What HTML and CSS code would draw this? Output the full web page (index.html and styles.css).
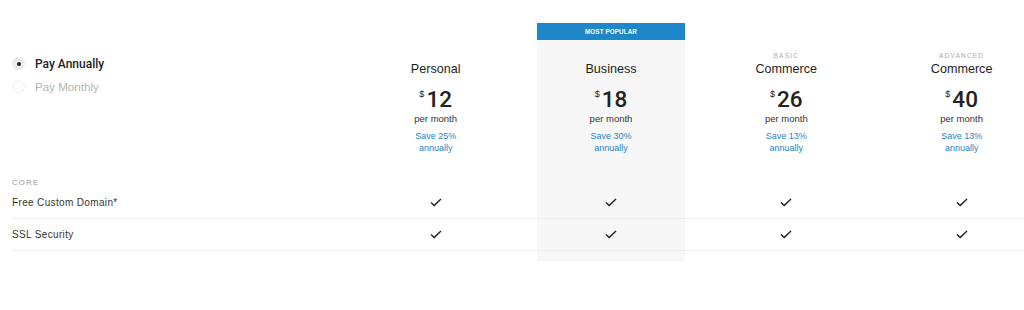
FILE: index.html
```html
<!DOCTYPE html>
<html>
<head>
<meta charset="utf-8">
<link rel="stylesheet" href="styles.css">
</head>
<body>
<div class="table">
  <div class="row head">
    <div class="cell toggle">
      <div class="opt on"><span class="radio"><span class="dot"></span></span>Pay Annually</div>
      <div class="opt off"><span class="radio"></span>Pay Monthly</div>
    </div>
    <div class="cell plan">
      <div class="banner-slot"></div>
      <div class="tier"></div>
      <div class="name">Personal</div>
      <div class="price"><span class="cur">$</span>12</div>
      <div class="per">per month</div>
      <div class="save">Save 25%<br>annually</div>
    </div>
    <div class="cell plan pop">
      <div class="banner-slot"><div class="banner">MOST POPULAR</div></div>
      <div class="tier"></div>
      <div class="name">Business</div>
      <div class="price"><span class="cur">$</span>18</div>
      <div class="per">per month</div>
      <div class="save">Save 30%<br>annually</div>
    </div>
    <div class="cell plan">
      <div class="banner-slot"></div>
      <div class="tier">BASIC</div>
      <div class="name">Commerce</div>
      <div class="price"><span class="cur">$</span>26</div>
      <div class="per">per month</div>
      <div class="save">Save 13%<br>annually</div>
    </div>
    <div class="cell plan">
      <div class="banner-slot"></div>
      <div class="tier">ADVANCED</div>
      <div class="name">Commerce</div>
      <div class="price"><span class="cur">$</span>40</div>
      <div class="per">per month</div>
      <div class="save">Save 13%<br>annually</div>
    </div>
  </div>
  <div class="row section">
    <div class="cell label">CORE</div>
    <div class="cell"></div>
    <div class="cell pop"></div>
    <div class="cell"></div>
    <div class="cell"></div>
  </div>
  <div class="row feature">
    <div class="cell fname">Free Custom Domain*</div>
    <div class="cell check"><svg viewBox="0 0 12 9" width="12" height="9"><polyline points="1,4.5 4.2,7.5 11,1" /></svg></div>
    <div class="cell check pop"><svg viewBox="0 0 12 9" width="12" height="9"><polyline points="1,4.5 4.2,7.5 11,1" /></svg></div>
    <div class="cell check"><svg viewBox="0 0 12 9" width="12" height="9"><polyline points="1,4.5 4.2,7.5 11,1" /></svg></div>
    <div class="cell check"><svg viewBox="0 0 12 9" width="12" height="9"><polyline points="1,4.5 4.2,7.5 11,1" /></svg></div>
  </div>
  <div class="row feature">
    <div class="cell fname">SSL Security</div>
    <div class="cell check"><svg viewBox="0 0 12 9" width="12" height="9"><polyline points="1,4.5 4.2,7.5 11,1" /></svg></div>
    <div class="cell check pop"><svg viewBox="0 0 12 9" width="12" height="9"><polyline points="1,4.5 4.2,7.5 11,1" /></svg></div>
    <div class="cell check"><svg viewBox="0 0 12 9" width="12" height="9"><polyline points="1,4.5 4.2,7.5 11,1" /></svg></div>
    <div class="cell check"><svg viewBox="0 0 12 9" width="12" height="9"><polyline points="1,4.5 4.2,7.5 11,1" /></svg></div>
  </div>
  <div class="row tail">
    <div class="cell"></div>
    <div class="cell"></div>
    <div class="cell pop"></div>
    <div class="cell"></div>
    <div class="cell"></div>
  </div>
</div>
</body>
</html>
```
FILE: styles.css
```css
html, body {
  margin: 0;
  padding: 0;
  background: #fff;
  overflow: hidden;
}
body {
  font-family: "Liberation Sans", Arial, sans-serif;
  color: #222;
}
.table {
  padding: 23px 0 0 12px;
  width: 1048px;
}
.row {
  display: grid;
  grid-template-columns: 336px repeat(4, 175.33px);
}
.cell.pop {
  background: linear-gradient(to right, transparent 14px, #f7f7f7 14px, #f7f7f7 calc(100% - 14px), transparent calc(100% - 14px));
}

/* toggle */
.toggle {
  padding-top: 29px;
}
.opt {
  display: flex;
  align-items: center;
  height: 23px;
  font-size: 12px;
  gap: 10px;
}
.opt.on {
  color: #222;
  font-family: Roboto, "Liberation Sans", sans-serif;
  font-weight: 500;
  font-size: 12px;
}
.opt.off {
  color: #b4b4b4;
  font-size: 11.6px;
}
.radio {
  width: 13px;
  height: 13px;
  border-radius: 50%;
  box-sizing: border-box;
  display: flex;
  align-items: center;
  justify-content: center;
}
.on .radio {
  background: #ececec;
}
.off .radio {
  border: 1px solid #f0f0f0;
}
.dot {
  width: 4px;
  height: 4px;
  border-radius: 50%;
  background: #222;
}

/* plan headers */
.plan {
  display: flex;
  flex-direction: column;
  align-items: center;
  text-align: center;
  padding-bottom: 4px;
}
.banner-slot {
  align-self: stretch;
  height: 17px;
  display: flex;
  justify-content: center;
}
.cell.pop .banner-slot {
  background: #fff;
  padding: 0 14px;
}
.banner {
  flex: 1;
  background: #1d87c9;
  color: #fff;
  font-size: 6.3px;
  font-weight: bold;
  letter-spacing: 0.1px;
  display: flex;
  align-items: center;
  justify-content: center;
}
.tier {
  margin-top: 11px;
  height: 10px;
  line-height: 10px;
  font-size: 6.5px;
  letter-spacing: 1.2px;
  color: #aaa;
}
.name {
  height: 16px;
  line-height: 16px;
  font-size: 12.6px;
  color: #1e1e1e;
}
.price {
  margin-top: 9px;
  height: 26px;
  line-height: 26px;
  font-family: Roboto, "Liberation Sans", sans-serif;
  font-size: 22.5px;
  font-weight: 500;
  color: #222;
  display: flex;
  align-items: flex-start;
}
.cur {
  font-family: "Liberation Sans", Arial, sans-serif;
  font-size: 9px;
  line-height: 9px;
  margin-top: 4px;
  margin-right: 2px;
  font-weight: normal;
}
.per {
  margin-top: 1px;
  height: 12px;
  line-height: 12px;
  font-size: 9.5px;
  color: #333;
}
.save {
  margin-top: 5px;
  line-height: 12px;
  font-size: 9px;
  color: #2585c8;
}

/* section */
.section .cell {
  height: 29px;
}
.label {
  display: flex;
  align-items: flex-end;
  font-size: 7.8px;
  letter-spacing: 1.2px;
  color: #999;
  line-height: 8px;
}

/* features */
.feature {
  border-bottom: 1px solid #efefef;
}
.feature .cell {
  height: 31px;
  display: flex;
  align-items: center;
}
.fname {
  font-size: 10px;
  color: #333;
  letter-spacing: 0.35px;
}
.check {
  justify-content: center;
}
.check svg {
  display: block;
}
.check polyline {
  fill: none;
  stroke: #222;
  stroke-width: 1.5;
}
.tail .cell {
  height: 10px;
}
```
